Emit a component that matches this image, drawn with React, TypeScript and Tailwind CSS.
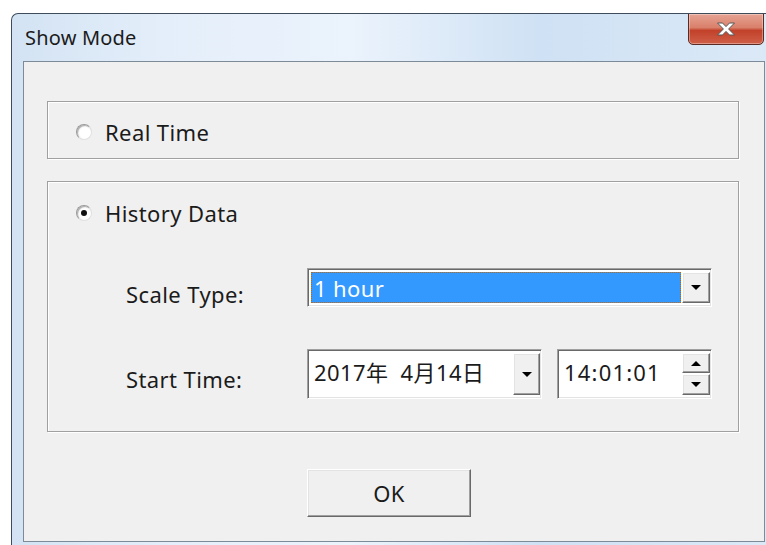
import { ReactNode } from "react";

const FONT = "font-['Noto_Sans','Noto_Sans_CJK_JP',sans-serif]";

// sunken edge used by text boxes and combo boxes
const sunken =
  "border border-[#a0a0a0] border-b-white border-r-white shadow-[inset_1px_1px_0_#696969,inset_-1px_-1px_0_#e3e3e3]";
// raised edge used by buttons
const raised =
  "bg-[#f0f0f0] border border-white border-b-[#696969] border-r-[#696969] shadow-[inset_-1px_-1px_0_#a0a0a0,inset_1px_1px_0_#e3e3e3]";

function Radio({ checked }: { checked?: boolean }) {
  return (
    <span className="flex h-[16px] w-[16px] shrink-0 items-center justify-center rounded-full border border-[#9a9a9a] border-b-[#e0e0e0] border-r-[#e0e0e0] bg-[radial-gradient(circle_at_60%_60%,#ffffff_45%,#ececec_100%)] shadow-[inset_1px_1px_1px_rgba(0,0,0,0.3)]">
      {checked && <span className="h-[6px] w-[6px] rounded-full bg-[#111]" />}
    </span>
  );
}

function Arrow({ up }: { up?: boolean }) {
  return (
    <svg width="10" height="5" viewBox="0 0 10 5">
      <path d={up ? "M0 5 L5 0 L10 5 Z" : "M0 0 L10 0 L5 5 Z"} fill="#000" />
    </svg>
  );
}

function DropButton({ className }: { className: string }) {
  return (
    <div className={`${raised} ${className} flex shrink-0 items-center justify-center`}>
      <Arrow />
    </div>
  );
}

function GroupBox({ className, children }: { className: string; children: ReactNode }) {
  return (
    <div
      className={`w-[692px] border border-[#a0a0a0] shadow-[inset_1px_1px_0_#fff,1px_1px_0_#fff] ${className}`}
    >
      {children}
    </div>
  );
}

export default function App() {
  return (
    <div className={`h-[545px] w-[766px] overflow-hidden bg-white pl-[11px] pt-[13px] ${FONT} text-[#1b1b1b]`}>
      <div className="relative flex h-[532px] w-[755px] flex-col overflow-hidden rounded-tl-[7px] border-l border-t border-[#3e4c5c] bg-[linear-gradient(90deg,#d3e3f3_0%,#e4eefa_20%,#ebf3fc_45%,#cfe1f4_70%,#dbe9f7_100%)]">
        {/* title bar */}
        <div className="flex h-[47px] shrink-0 items-center pl-[13px] text-[20px] tracking-[0.2px]">Show Mode</div>

        {/* close button */}
        <div className="absolute right-[2px] top-[-1px] flex h-[32px] w-[76px] items-center justify-center rounded-b-[5px] border border-[#5b2a22] bg-[linear-gradient(180deg,#e6a393_0%,#d9806b_45%,#c2412a_55%,#cf5f48_100%)] shadow-[inset_0_0_0_1px_rgba(255,255,255,0.35)]">
          <svg width="20" height="14" viewBox="0 0 20 14">
            <path
              d="M1.5 1 H6.5 L10 4.6 L13.5 1 H18.5 L12.6 7 L18.5 13 H13.5 L10 9.4 L6.5 13 H1.5 L7.4 7 Z"
              fill="#fff"
              stroke="#555"
              strokeWidth="1"
              strokeLinejoin="round"
            />
          </svg>
        </div>

        <div className="flex flex-1 pl-[11px] pr-px">
          {/* client area */}
          <div className="flex h-[481px] w-[742px] flex-col border border-[#7d8a98] bg-[#f0f0f0] pl-[23px] pt-[39px] text-[22px] leading-[30px] tracking-[0.4px]">
            <GroupBox className="flex h-[58px] items-center pl-[28px] pt-[3px]">
              <Radio />
              <span className="ml-[13px]">Real Time</span>
            </GroupBox>

            <GroupBox className="mt-[22px] flex h-[251px] flex-col pl-[28px] pt-[16px]">
              <div className="flex h-[30px] items-center">
                <Radio checked />
                <span className="ml-[13px]">History Data</span>
              </div>

              {/* Scale Type */}
              <div className="mt-[40px] flex h-[39px] items-center pl-[50px]">
                <span className="w-[181px] pt-[12px]">Scale Type:</span>
                <div className={`${sunken} flex h-[39px] w-[405px] items-stretch bg-white py-[3px] pl-[3px] pr-[1px]`}>
                  <div className="flex flex-1 items-center border border-dotted border-[#c86400] bg-[#3399ff] pl-[2px] text-white">
                    1 hour
                  </div>
                  <DropButton className="ml-px w-[28px]" />
                </div>
              </div>

              {/* Start Time */}
              <div className="mt-[42px] flex h-[50px] items-center pl-[50px]">
                <span className="w-[181px] pt-[10px]">Start Time:</span>
                <div className={`${sunken} flex h-[50px] w-[235px] items-stretch bg-white py-[3px] pr-px`}>
                  <span className="flex flex-1 items-center pb-[4px] pl-[6px]">2017年&nbsp;&nbsp;4月14日</span>
                  <DropButton className="w-[27px]" />
                </div>
                <div className={`${sunken} ml-[15px] flex h-[50px] w-[155px] items-stretch bg-white py-[3px] pr-px`}>
                  <span className="flex flex-1 items-center pb-[4px] pl-[6px] tracking-[1.2px]">14:01:01</span>
                  <div className="flex w-[28px] flex-col justify-between">
                    <div className={`${raised} flex h-[20px] items-center justify-center`}>
                      <Arrow up />
                    </div>
                    <div className={`${raised} flex h-[21px] items-center justify-center`}>
                      <Arrow />
                    </div>
                  </div>
                </div>
              </div>
            </GroupBox>

            <div className="ml-[260px] mt-[37px]">
              <button className={`${raised} flex h-[48px] w-[164px] items-center justify-center`}>OK</button>
            </div>
          </div>
        </div>
      </div>
    </div>
  );
}
